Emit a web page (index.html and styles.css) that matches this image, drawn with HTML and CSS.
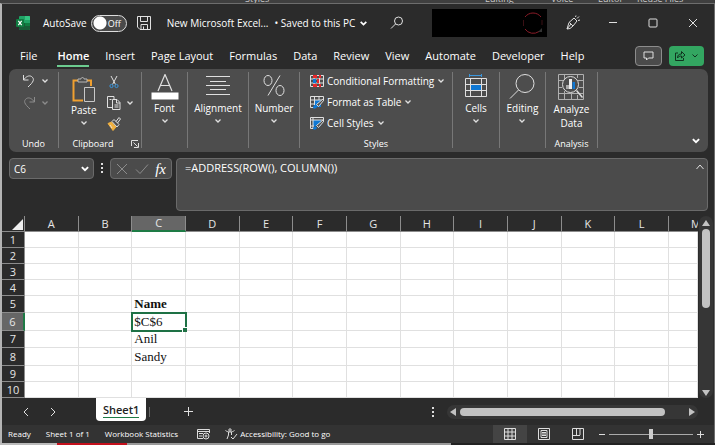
FILE: index.html
```html
<!DOCTYPE html>
<html lang="en">
<head>
  <meta charset="UTF-8" /><meta name="viewport" content="width=device-width, initial-scale=1.0" />
  <title>New Microsoft Excel</title>
  <link rel="stylesheet" href="styles.css">
</head>
<body>
  <svg width="0" height="0" class="defs">
    <symbol id="down" viewBox="0 0 8 8"><path d="M1.500 2.500 4 5l2.500-2.500" /></symbol>
  </svg>

  <!-- strip of the window behind -->
  <div class="behind"><span class="b1">Styles</span><span class="b2">Editing</span><span class="b3">Voice</span><span class="b4">Editor</span><span class="b5">Reuse Files</span></div>

  <div class="window">
    <header class="titlebar">
      <svg class="logo" width="14" height="14" viewBox="0 0 14 14">
        <rect x="3" y="0" width="11" height="14" rx="1" fill="#21a366" />
        <path d="M3 7h6v7H4a1 1 0 0 1-1-1z" fill="#185c37" /><path d="M9 7h5v3H9z" fill="#107c41" /><path d="M9 10h5v3a1 1 0 0 1-1 1H9z" fill="#185c37" />
        <path d="M9 0h4a1 1 0 0 1 1 1v3H9z" fill="#33c481" />
        <rect x="0" y="3" width="8" height="8" rx="1" fill="#107c41" />
        <path d="M2.300 4.800 5.700 9.200M5.700 4.800 2.300 9.200" stroke="#fff" stroke-width="1.200" />
      </svg>
      <label class="autosave">AutoSave <span class="switch"><input type="checkbox" /><span>Off</span></span></label>
      <button class="save" aria-label="Save"><svg width="14" height="14" viewBox="0 0 14 14"><path d="M.5.5h13v13H3L.5 11zM3.500.5v5h7v-5M4 13.500v-5h6.500v5M6.500 13v-2.500" /></svg></button>
      <span class="doc">New Microsoft Excel...</span>
      <button class="saved">• Saved to this PC <svg width="9" height="9" class="bold"><use href="#down" /></svg></button>
      <button class="search" aria-label="Search"><svg width="14" height="14" viewBox="0 0 14 14"><circle cx="8.500" cy="5" r="4" /><path d="M5.500 8 1 12.500" /></svg></button>
      <div class="account"><svg width="22" height="22" viewBox="0 0 22 22"><path d="M3 5a10 10 0 0 1 16 0M3 17a10 10 0 0 0 14 2.500" stroke="#8a1c28" /><path d="M1.500 8v6M20 8v5" stroke="#3a1014" /><path d="M16 20h4v-4z" fill="#333" stroke="none" /></svg></div>
      <div class="winbtns">
        <button aria-label="Pen"><svg width="16" height="16" viewBox="0 0 16 16"><path d="M2 14 4 7.500 9 3l3 3-4 5-3 2.500zM2 14l4-5M4.500 7.500l3.500 3.500M10.500 2l.5-1.500M12 3.500 14 1.500M13 5.500l2-.5" /></svg></button>
        <button aria-label="Minimize"><svg width="10" height="10" viewBox="0 0 10 10"><path d="M1 4.500h8" /></svg></button>
        <button aria-label="Maximize"><svg width="10" height="10" viewBox="0 0 10 10"><rect x="1" y="1" width="8" height="8" rx="1" /></svg></button>
        <button aria-label="Close"><svg width="10" height="10" viewBox="0 0 10 10"><path d="M1 1l8 8M9 1 1 9" /></svg></button>
      </div>
    </header>

    <nav class="tabs">
      <a href="#" class="file">File</a><a href="#" class="active">Home</a><a href="#">Insert</a><a href="#">Page Layout</a><a href="#">Formulas</a><a href="#">Data</a><a href="#">Review</a><a href="#">View</a><a href="#">Automate</a><a href="#">Developer</a><a href="#">Help</a>
      <button class="comment" aria-label="Comments"><svg width="11" height="10" viewBox="0 0 11 10"><path d="M1 1h9v6H5.500L3.500 9V7H1z" /></svg></button>
      <button class="share" aria-label="Share"><svg width="12" height="12" viewBox="0 0 12 12"><path d="M4 3H1.500v7.500h8V8M3.500 8c0-3 1.500-4 4-4V1.500L11 5 7.500 8V6c-2 0-3 .5-4 2z" /></svg><svg width="8" height="8"><use href="#down" /></svg></button>
    </nav>

    <section class="ribbon">
      <div class="group undo">
        <button aria-label="Undo"><svg width="14" height="14" viewBox="0 0 14 14"><path d="M1.500 1v5h5M1.500 6C4 2.500 7 1 9.500 2.500 13 5 11.500 8 6 13" /></svg><svg width="8" height="8"><use href="#down" /></svg></button>
        <button aria-label="Redo" class="dim"><svg width="14" height="14" viewBox="0 0 14 14"><path d="M12.500 1v5h-5M12.500 6C10 2.500 7 1 4.500 2.500 1 5 2.500 8 8 13" /></svg><svg width="8" height="8"><use href="#down" /></svg></button>
        <h2>Undo</h2>
      </div>
      <div class="group clipboard">
        <button class="big paste"><svg width="24" height="26" viewBox="0 0 24 26"><path d="M6 3.500H1.500v20H11M15 3.500h4V9" stroke="#f0a030" stroke-width="2" /><path d="M6 2h3c0-2 3-2 3 0h3v3H6z" stroke="#b8b8b8" /><path d="M12.500 10.500h10v14h-10z" fill="#4d4d4d" stroke="#c8c8c8" /></svg>Paste<svg width="8" height="8"><use href="#down" /></svg></button>
        <div class="stack">
          <button aria-label="Cut"><svg width="14" height="14" viewBox="0 0 14 14"><path d="M4 1l4.500 8.500M10 1 5.500 9.500" /><g stroke="#3a96dd"><circle cx="4.500" cy="11" r="1.600" /><circle cx="9.500" cy="11" r="1.600" /></g></svg></button>
          <button aria-label="Copy"><svg width="14" height="14" viewBox="0 0 14 14"><path d="M5 11.500H.5V.5H7V3M5.500 3.500h4.500l3 3v7H5.500zM9.500 3.500v3.500H13M7.500 9h4M7.500 11h4M2.500 3.500h2" /></svg><svg width="8" height="8"><use href="#down" /></svg></button>
          <button aria-label="Format Painter"><svg width="14" height="14" viewBox="0 0 14 14"><path d="M1 6.500 4.500 5l4.500 5-3 3.500z" fill="#f0b040" stroke="#f0b040" /><path d="M5 4.500 7 2.500l5 5-2 2.500zM9 4.500l3-4 1.500 1.500-3 4M3 8l2 3" /></svg></button>
        </div>
        <h2>Clipboard</h2>
        <button class="launch" aria-label="Clipboard options"><svg width="8" height="8" viewBox="0 0 8 8"><path d="M.5 6V.5H7M2.500 2.500l4 4M7.500 3v4.500H3" /></svg></button>
      </div>
      <div class="group">
        <button class="big"><svg width="28" height="27" viewBox="0 0 28 27"><path d="M7 17 14 .5 21 17M9.500 11.500h9" stroke-width="1.200" /><path d="M.5 18.500h27v7H.5z" fill="#fff" stroke="none" /></svg>Font<svg width="8" height="8"><use href="#down" /></svg></button>
      </div>
      <div class="group">
        <button class="big"><svg width="28" height="27" viewBox="0 0 28 27"><path d="M2 2.500h24M6 7.500h16M2 11.500h24M6 15.500h16M2 20.500h24" /></svg>Alignment<svg width="8" height="8"><use href="#down" /></svg></button>
      </div>
      <div class="group">
        <button class="big"><svg width="24" height="27" viewBox="0 0 24 27"><ellipse cx="6" cy="6.500" rx="4" ry="5" /><ellipse cx="18" cy="16.500" rx="4" ry="5" /><path d="M18 1.500 6 21.500" /></svg>Number<svg width="8" height="8"><use href="#down" /></svg></button>
      </div>
      <div class="group styles">
        <button><svg width="14" height="14" viewBox="0 0 14 14"><path d="M.5 1.500h13v11H.5zM.5 5h13M.5 9h13M4 1v12M9.500 1v12" /><path d="M3 1h4v3H3zM9 1h2v3H9zM3 10h4v3H3zM9 10h2v3H9zM7 5h2v4H7z" fill="#e8262a" stroke="none" /><path d="M3 5h3v4H3z" fill="#0f78d4" stroke="none" /></svg>Conditional Formatting<svg width="8" height="8"><use href="#down" /></svg></button>
        <button><svg width="14" height="14" viewBox="0 0 14 14"><path d="M4 5h7v7H4z" fill="#0f78d4" stroke="none" /><path d="M13.500 5V1.500H.5v11H4M.5 5h13M.5 9H5M4.500 1v9M9 1v4" /><path d="M6.500 9.500l2 2L14 5l-1-1z" fill="#4d4d4d" stroke="#ddd" /><path d="M3 13c0-3 3-4 4-1-1 2-3 2-4 1z" fill="#0f78d4" stroke="none" /></svg>Format as Table<svg width="8" height="8"><use href="#down" /></svg></button>
        <button><svg width="14" height="14" viewBox="0 0 14 14"><path d="M3 4h8v6H3z" fill="#0f78d4" stroke="none" /><path d="M13.500 5V1.500H.5v11H4M.5 4h13M.5 10H4M3 1v12" /><path d="M6.500 9.500l2 2L14 5l-1-1z" fill="#4d4d4d" stroke="#ddd" /><path d="M3 13c0-3 3-4 4-1-1 2-3 2-4 1z" fill="#0f78d4" stroke="none" /></svg>Cell Styles<svg width="8" height="8"><use href="#down" /></svg></button>
        <h2>Styles</h2>
      </div>
      <div class="group">
        <button class="big"><svg width="24" height="27" viewBox="0 0 24 27"><path d="M5.500 1.500h12M5.500 0v3M17.500 0v3" stroke="#3a96dd" /><path d="M1.500 4.500h21v18h-21zM1.500 10.500h21M1.500 16.500h21M6.500 4v18M17.500 4v18" /><path d="M7 11h10v5H7z" fill="#0f78d4" stroke="none" /></svg>Cells<svg width="8" height="8"><use href="#down" /></svg></button>
      </div>
      <div class="group">
        <button class="big"><svg width="26" height="27" viewBox="0 0 26 27"><circle cx="16" cy="9.500" r="9" /><path d="M9.500 16 1 24.500" /></svg>Editing<svg width="8" height="8"><use href="#down" /></svg></button>
      </div>
      <div class="group analysis">
        <button class="big"><svg width="28" height="28" viewBox="0 0 28 28"><path d="M1.500.5h25v25h-25zM1 6.500h6M21 6.500h5M1 13.500h4M22 13.500h4M1 19.500h25M7.500 0v6M7.500 17v8M14.500 19v6M20.500 0v4M20.500 21v4" stroke="#b0b0b0" /><circle cx="13.500" cy="10.500" r="8" fill="#4d4d4d" stroke="#ddd" /><path d="M19.500 16.500l6 7" stroke="#ddd" stroke-width="1.500" /><path d="M9 11h3v4H9z" fill="#aaa" stroke="none" /><path d="M12 5h3v10h-3z" fill="#eee" stroke="none" /><path d="M15.500 8H18v7h-2.500z" fill="#0f78d4" stroke="none" /></svg>Analyze<br>Data</button>
        <h2>Analysis</h2>
      </div>
      <button class="collapse" aria-label="Ribbon options"><svg width="10" height="10" class="bold"><use href="#down" /></svg></button>
    </section>

    <section class="formula">
      <div class="namebox"><input type="text" value="C6" aria-label="Name Box" /><button aria-label="Names"><svg width="10" height="10" class="bold"><use href="#down" /></svg></button></div>
      <svg class="dots" width="4" height="12" viewBox="0 0 4 12"><path d="M1 1h2v2H1zM1 5h2v2H1zM1 9h2v2H1z" /></svg>
      <div class="fx">
        <button aria-label="Cancel" class="dim"><svg width="12" height="12" viewBox="0 0 12 12"><path d="M1 1l10 10M11 1 1 11" /></svg></button>
        <button aria-label="Enter" class="dim"><svg width="14" height="12" viewBox="0 0 14 12"><path d="M1 6.500 5 10.500 13 1.500" /></svg></button>
        <button class="fn">fx</button>
      </div>
      <div class="bar"><textarea aria-label="Formula">=ADDRESS(ROW(), COLUMN())</textarea><button aria-label="Collapse formula bar"><svg width="10" height="8" viewBox="0 0 10 8"><path d="M1.500 6 5 2l3.500 4" /></svg></button></div>
    </section>

    <main class="sheet">
      <table>
        <thead>
          <tr><th class="corner"><svg width="12" height="12" viewBox="0 0 12 12"><path d="M12 1v11H1z" fill="#f0f0f0" /></svg></th><th>A</th><th>B</th><th class="sel">C</th><th>D</th><th>E</th><th>F</th><th>G</th><th>H</th><th>I</th><th>J</th><th>K</th><th>L</th><th class="last">M</th></tr>
        </thead>
        <tbody>
          <tr><th>1</th><td></td><td></td><td></td><td></td><td></td><td></td><td></td><td></td><td></td><td></td><td></td><td></td><td></td></tr>
          <tr><th>2</th><td></td><td></td><td></td><td></td><td></td><td></td><td></td><td></td><td></td><td></td><td></td><td></td><td></td></tr>
          <tr><th>3</th><td></td><td></td><td></td><td></td><td></td><td></td><td></td><td></td><td></td><td></td><td></td><td></td><td></td></tr>
          <tr><th>4</th><td></td><td></td><td></td><td></td><td></td><td></td><td></td><td></td><td></td><td></td><td></td><td></td><td></td></tr>
          <tr class="mid"><th>5</th><td></td><td></td><td><b>Name</b></td><td></td><td></td><td></td><td></td><td></td><td></td><td></td><td></td><td></td><td></td></tr>
          <tr class="tall"><th class="sel">6</th><td></td><td></td><td class="current">$C$6</td><td></td><td></td><td></td><td></td><td></td><td></td><td></td><td></td><td></td><td></td></tr>
          <tr class="mid"><th>7</th><td></td><td></td><td>Anil</td><td></td><td></td><td></td><td></td><td></td><td></td><td></td><td></td><td></td><td></td></tr>
          <tr class="tall"><th>8</th><td></td><td></td><td>Sandy</td><td></td><td></td><td></td><td></td><td></td><td></td><td></td><td></td><td></td><td></td></tr>
          <tr><th>9</th><td></td><td></td><td></td><td></td><td></td><td></td><td></td><td></td><td></td><td></td><td></td><td></td><td></td></tr>
          <tr><th>10</th><td></td><td></td><td></td><td></td><td></td><td></td><td></td><td></td><td></td><td></td><td></td><td></td><td></td></tr>
        </tbody>
      </table>
      <div class="vscroll">
        <svg width="8" height="8" viewBox="0 0 8 8"><path d="M4 1l4 6H0z" /></svg>
        <i></i>
        <svg width="8" height="8" viewBox="0 0 8 8"><path d="M4 7 0 1h8z" /></svg>
      </div>
    </main>

    <div class="sheetbar">
      <button aria-label="Previous sheet"><svg width="8" height="10" viewBox="0 0 8 10"><path d="M6 1 2 5l4 4" /></svg></button>
      <button aria-label="Next sheet"><svg width="8" height="10" viewBox="0 0 8 10"><path d="M2 1l4 4-4 4" /></svg></button>
      <button class="sheettab">Sheet1</button>
      <button class="add" aria-label="New sheet"><svg width="10" height="10" viewBox="0 0 10 10"><path d="M4.500 0v9M0 4.500h9" /></svg></button>
      <svg class="dots" width="4" height="12" viewBox="0 0 4 12"><path d="M1 1h2v2H1zM1 5h2v2H1zM1 9h2v2H1z" /></svg>
      <div class="hscroll">
        <svg width="8" height="8" viewBox="0 0 8 8"><path d="M1 4l6-4v8z" /></svg>
        <i></i>
        <svg width="8" height="8" viewBox="0 0 8 8"><path d="M7 4 1 0v8z" /></svg>
      </div>
    </div>

    <footer class="status">
      <span>Ready</span>
      <span>Sheet 1 of 1</span>
      <span>Workbook Statistics</span>
      <svg class="macro" width="13" height="12" viewBox="0 0 13 12"><path d="M6 10.500H.5v-9h12V5M.5 3.500h12M2 5.500h4M2 8h3" /><circle cx="9" cy="8" r="3" /><circle cx="9" cy="8" r="1" /></svg>
      <span class="access"><svg width="13" height="12" viewBox="0 0 13 12"><circle cx="5" cy="2" r="1.200" /><path d="M.5 2.500C3 4.500 7 4.500 9.500 2.500M3.500 4v3L2 11M6.500 4v3M6 9l2 2 4-5" /></svg>Accessibility: Good to go</span>
      <div class="views">
        <button class="on" aria-label="Normal"><svg width="12" height="12" viewBox="0 0 12 12"><path d="M.5.5h11v11H.5zM4 0v12M8 0v12M0 4h12M0 8h12" /></svg></button>
        <button aria-label="Page layout view"><svg width="12" height="12" viewBox="0 0 12 12"><path d="M.5.5h11v11H.5zM3 2.500h6v7H3zM4 4.500h4M4 6h4M4 7.500h4" /></svg></button>
        <button aria-label="Page break view"><svg width="12" height="12" viewBox="0 0 12 12"><path d="M.5.5h11v11H.5zM4.500 1v6M8 1v6M1 7.500h7" /></svg></button>
      </div>
      <button class="zoom" aria-label="Zoom out"><svg width="8" height="8" viewBox="0 0 8 8"><path d="M1 4.500h6" /></svg></button>
      <input type="range" aria-label="Zoom" value="50" />
      <button class="zoom" aria-label="Zoom in"><svg width="8" height="8" viewBox="0 0 8 8"><path d="M1 4.500h7M4.500 1v7" /></svg></button>
    </footer>
  </div>
  <div class="below"></div>
</body>
</html>
```
FILE: styles.css
```css
* { box-sizing: border-box; }
body { margin: 0; min-height: 100vh; display: flex; flex-direction: column; background: #3c3c3c; color: #fff; font: 10px/14px "Open Sans", "Noto Sans", sans-serif; overflow: hidden; }
button { background: none; border: 0; padding: 0; color: inherit; font: inherit; display: flex; align-items: center; justify-content: center; }
svg { display: block; flex: none; fill: none; stroke: #e0e0e0; }
.defs { position: absolute; }
.logo { stroke: none; }
.bold { stroke: #fff; stroke-width: 1.5; }
h2 { margin: 0; font: 9px/12px "Open Sans", sans-serif; }
i { display: block; background: #c2c2c2; border-radius: 4px; }

.behind { height: 3px; display: flex; align-items: flex-end; overflow: hidden; background: #3f3f3f; color: #ccc; font-size: 9px; line-height: 9px; white-space: nowrap; }
.b1 { margin-left: 245px; width: 240px; }
.b2 { width: 66px; }
.b3 { width: 47px; }
.b4 { width: 39px; }
.below { height: 2px; background: linear-gradient(to right, #bbb 57px, #c4101c 57px, #c4101c 127px, #999 127px, #999 451px, #222 451px); }

.window { flex: 1; display: flex; flex-direction: column; background: #2b2b2b; border: solid #6d6d6d; border-width: 1px 1px 0 0; border-left: 2px solid #b4b4b4; }

.titlebar { height: 38px; display: flex; align-items: center; padding: 0 1px 0 14px; }
.autosave { display: flex; align-items: center; gap: 4px; margin-left: 13px; }
.switch { position: relative; }
.switch input { display: block; appearance: none; width: 36px; height: 17px; margin: 0; border: 1px solid #ddd; border-radius: 9px; background: radial-gradient(circle at 8px 7px, #fff 6px, #4a4a4a 7px); }
.switch span { position: absolute; right: 6px; top: 2px; font-size: 9px; line-height: 13px; }
.save { margin-left: 10px; }
.doc { margin-left: 16px; }
.saved { gap: 4px; margin-left: 6px; }
.search { margin-left: 22px; }
.account { width: 115px; height: 28px; margin-left: auto; padding: 3px; display: flex; justify-content: flex-end; background: #000; }
.winbtns { display: flex; margin-left: 6px; }
.winbtns button { width: 40px; height: 24px; }

.tabs { height: 27px; display: flex; align-items: flex-start; gap: 16px; padding: 4px 10px 0 18px; font-size: 11px; line-height: 20px; }
.tabs a { color: #fff; text-decoration: none; height: 21px; white-space: nowrap; }
.tabs .file { margin-right: 4px; }
.tabs .active { font-weight: 600; border-bottom: 2px solid #6ccb8f; }
.comment { width: 27px; height: 20px; margin-left: auto; background: #4b4b4b; border: 1px solid #8c8c8c; border-radius: 4px; }
.share { width: 35px; height: 20px; margin-left: -9px; gap: 5px; background: #33a661; border-radius: 4px; }
.share svg { stroke: #10331f; }

.ribbon { position: relative; height: 83px; margin: 0 6px 0 7px; padding: 3px 0 4px; display: grid; grid-template-columns: 50px 83px 46px 61px 51px 153px 47px 46px 52px; background: #4d4d4d; border-radius: 7px; }
.group { position: relative; border-right: 1px solid #777; padding-top: 2px; display: flex; justify-content: center; align-items: flex-start; }
.group h2 { position: absolute; left: 0; right: 0; bottom: -2px; text-align: center; }
.group use { stroke-width: 1.3; }
.big { flex-direction: column; line-height: 14px; }
.big svg + svg { margin-top: 2px; }
.undo { flex-direction: column; justify-content: flex-start; gap: 8px; padding-left: 13px; }
.undo button { gap: 5px; }
.dim svg { stroke: #8c8c8c; }
.clipboard { justify-content: flex-start; padding: 3px 0 0 12px; gap: 10px; }
.clipboard h2 { right: 14px; }
.paste { padding-top: 2px; }
.stack { display: grid; gap: 7px; }
.stack button { justify-content: flex-start; gap: 5px; }
.group .launch { position: absolute; right: 2px; bottom: 0; }
.styles { flex-direction: column; justify-content: flex-start; gap: 7px; padding-left: 10px; }
.styles button { gap: 3px; }
.collapse { position: absolute; right: 7px; bottom: 6px; }

.formula { display: flex; align-items: flex-start; padding: 6px 6px 5px 7px; }
.namebox { width: 85px; height: 21px; display: flex; align-items: center; padding: 0 3px 0 4px; background: #4b4b4b; border: 1px solid #6a6a6a; border-radius: 4px; }
.namebox input { flex: 1; min-width: 0; padding: 0; border: 0; background: none; color: #fff; font: inherit; }
.dots { fill: #ddd; stroke: none; margin: 4px 6px 0 6px; }
.fx { width: 62px; height: 21px; display: flex; justify-content: space-between; align-items: center; padding: 0 5px; background: #4b4b4b; border: 1px solid #6a6a6a; border-radius: 4px; }
.fn { font: italic 15px/16px "Liberation Serif", serif; }
.bar { flex: 1; height: 53px; margin-left: 4px; display: flex; align-items: flex-start; padding: 2px 2px 0 8px; background: #4b4b4b; border: 1px solid #6a6a6a; border-radius: 4px; }
.bar textarea { flex: 1; height: 44px; padding: 0; border: 0; resize: none; background: none; color: #fff; font: 11px/14px "Open Sans", sans-serif; }
.bar button { margin-top: 2px; }

.sheet { display: flex; padding-right: 1px; background: #2b2b2b; }
.sheet table { flex: 1; width: 0; table-layout: fixed; border-collapse: separate; border-spacing: 0; background: #fff; color: #111; font: 13px/14px "Liberation Serif", serif; }
.sheet th, .sheet td { height: 16px; padding: 0; overflow: hidden; }
.sheet td { padding-left: 2px; border-right: 1px solid #e0e0e0; border-bottom: 1px solid #e0e0e0; white-space: nowrap; }
.sheet th { background: #2b2b2b; color: #e6e6e6; font: 11px/14px "Open Sans", sans-serif; border-right: 1px solid #8c8c8c; border-bottom: 1px solid #8c8c8c; }
.sheet .corner { width: 23px; }
.sheet .corner svg { margin-left: 9px; stroke: none; }
.sheet .last { width: 29px; padding-left: 22px; border-right: 0; text-align: left; }
.sheet .sel { background: #666; }
thead .sel { border-bottom: 2px solid #1e7b45; }
tbody .sel { border-right: 2px solid #1e7b45; }
.sheet .mid > * { height: 17px; line-height: 16px; }
.sheet .tall > * { height: 18px; line-height: 16px; }
.sheet .current { position: relative; overflow: visible; outline: 2px solid #1e7145; outline-offset: -1px; }
.current::after { content: ""; position: absolute; right: -2px; bottom: -2px; width: 4px; height: 4px; background: #1e7145; border: solid #fff; border-width: 1px 0 0 1px; }
.vscroll { width: 14px; margin-left: 1px; padding: 3px 0 1px; display: flex; flex-direction: column; align-items: center; background: #363636; border-radius: 7px; }
.vscroll svg, .hscroll svg { fill: #c2c2c2; stroke: none; }
.vscroll i { width: 8px; height: 79px; margin: 2px 0 auto; }

.sheetbar { flex: 1; min-height: 27px; display: flex; align-items: center; padding: 0 16px 0 20px; }
.sheetbar > button:nth-child(2) { margin-left: 19px; }
.sheetbar .sheettab { align-self: flex-start; height: 23px; margin-left: 39px; padding: 0 7px; background: linear-gradient(#1e7b45, #1e7b45) center 19px / 36px 1px no-repeat #fff; border-radius: 0 0 4px 4px; color: #222; font-size: 11px; font-weight: 600; }
.add { margin-left: 3px; padding-left: 34px; border-left: 1px solid #666; }
.sheetbar .dots { margin: 0 12px 0 auto; }
.hscroll { width: 251px; height: 14px; display: flex; align-items: center; gap: 3px; padding: 0 2px; background: #363636; border-radius: 7px; }
.hscroll i { width: 205px; height: 8px; margin-right: auto; }

.status { height: 18px; display: flex; align-items: center; gap: 15px; padding: 0 22px 0 6px; background: #333; font-size: 8px; }
.status svg { stroke: #ddd; }
.macro { margin-left: 4px; }
.access { display: flex; align-items: center; gap: 2px; }
.views { display: flex; margin-left: auto; }
.views button { width: 34px; height: 18px; }
.views .on { background: #444; }
.status .zoom { margin: 0 -12px; }
.status input { appearance: none; width: 84px; height: 12px; margin: 0; background: linear-gradient(#aaa, #aaa) center / 100% 1px no-repeat; }
.status input::-webkit-slider-thumb { appearance: none; width: 4px; height: 10px; background: #ccc; }
```
